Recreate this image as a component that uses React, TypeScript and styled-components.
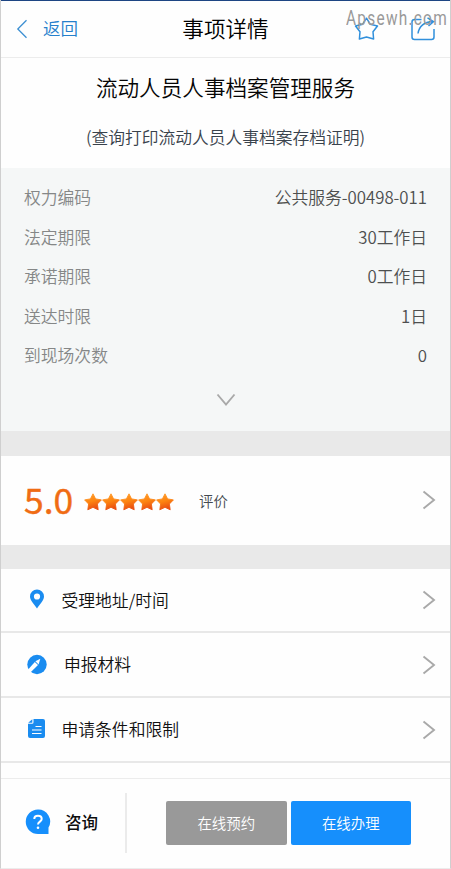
import React from "react";
import styled, { createGlobalStyle } from "styled-components";

const Global = createGlobalStyle`
  * { box-sizing: border-box; }
  body { margin: 0; background: #fff; font-family: "Noto Sans CJK SC", "Noto Sans", sans-serif; font-weight: 350; }
`;

const Screen = styled.main`
  width: 451px;
  height: 869px;
  display: flex;
  flex-direction: column;
  overflow: hidden;
  border-left: 1px solid #cfcfcf;
  border-right: 1px solid #cfcfcf;
  border-bottom: 1px solid #ececec;
  background: #fefefe;
`;

const Header = styled.header`
  position: relative;
  height: 58px;
  flex: none;
  display: grid;
  grid-template-columns: 1fr auto 1fr;
  align-items: center;
  border-top: 1px solid #1d4583;
  border-bottom: 1px solid #ececec;
  margin: 0 -1px;
  padding: 0 16px;
`;

const Back = styled.a`
  display: flex;
  align-items: center;
  gap: 15px;
  font-size: 17.5px;
  line-height: 24px;
  color: #2580cc;
`;

const BackText = styled.span`
  padding-bottom: 2px;
`;

const HeaderTitle = styled.h1`
  margin: 0;
  padding-bottom: 2px;
  font-size: 21.6px;
  line-height: 30px;
  font-weight: 350;
  color: #000;
`;

const Actions = styled.div`
  display: flex;
  justify-content: flex-end;
  align-items: center;
  gap: 32px;
`;

const Watermark = styled.span`
  position: absolute;
  left: 346px;
  top: 7px;
  font: 400 19.5px/22px "Roboto", sans-serif;
  letter-spacing: 1.6px;
  transform: scaleX(0.79);
  transform-origin: left center;
  color: #999;
`;

const Heading = styled.section`
  height: 110px;
  flex: none;
  padding-top: 13px;
  text-align: center;
`;

const Name = styled.h2`
  margin: 0;
  font-size: 21.6px;
  line-height: 32px;
  font-weight: 350;
  color: #050505;
`;

const Subtitle = styled.p`
  margin: 21px 0 0;
  font-size: 16.75px;
  line-height: 26px;
  color: #39424c;
`;

const Info = styled.section`
  height: 263px;
  flex: none;
  padding: 10.4px 23px 0;
  background: #f5f7f7;
`;

const InfoRow = styled.div`
  display: flex;
  justify-content: space-between;
  height: 39.5px;
  line-height: 39.5px;
  font-size: 16.8px;
`;

const Label = styled.span`
  color: #858787;
`;

const Value = styled.span`
  color: #4d4f4f;
`;

const Expand = styled.div`
  display: flex;
  justify-content: center;
  padding-top: 17px;
`;

const Gap = styled.div<{ $h: number }>`
  height: ${(p) => p.$h}px;
  flex: none;
  background: #e9e9e9;
`;

const Rating = styled.section`
  height: 89px;
  flex: none;
  display: flex;
  align-items: center;
  padding: 0 14px 2px 23px;
`;

const Score = styled.strong`
  width: 60px;
  padding-bottom: 2px;
  font-size: 35.5px;
  line-height: 50px;
  font-weight: 400;
  -webkit-text-stroke: 0.4px #f06c14;
  color: #f06c14;
`;

const Stars = styled.div`
  display: flex;
  width: 115px;
  padding-top: 4px;
`;

const RatingText = styled.span`
  flex: 1;
  padding-top: 2px;
  font-size: 14.4px;
  color: #444a50;
`;

const Item = styled.div<{ $indent: number }>`
  height: 65.2px;
  flex: none;
  display: grid;
  grid-template-columns: ${(p) => p.$indent}px 1fr auto;
  align-items: center;
  padding: 0 14px 0 23px;
  border-bottom: 2px solid #e8e8e8;
  font-size: 16.8px;
  color: #111;

  &:first-child {
    height: 64px;
  }
`;

const ItemText = styled.span`
  padding-bottom: 1px;
`;

const ItemList = styled.section`
  flex: none;
`;

const Footer = styled.footer`
  height: 90px;
  margin-top: auto;
  flex: none;
  display: flex;
  align-items: center;
  border-top: 1px solid #ececec;
  padding-bottom: 1px;
`;

const Consult = styled.div`
  width: 126px;
  height: 60px;
  flex: none;
  display: flex;
  align-items: center;
  gap: 14px;
  padding: 0 0 2px 24px;
  border-right: 2px solid #ebebeb;
  font-size: 16.5px;
  font-weight: 500;
  color: #0d0d0d;
`;

const Buttons = styled.div`
  display: flex;
  gap: 4px;
  margin-left: 39px;
`;

const Button = styled.button<{ $primary?: boolean }>`
  width: 120.5px;
  height: 44px;
  padding: 0 0 2px;
  border: 0;
  border-radius: 2px;
  font: 350 14.4px "Noto Sans CJK SC", sans-serif;
  color: #fff;
  background: ${(p) => (p.$primary ? "#168ffc" : "#999")};
`;

const STAR = "M9 0.8 L11.6 5.9 L17.4 6.9 L13.4 11 L14.2 16.8 L9 14.3 L3.8 16.8 L4.6 11 L0.6 6.9 L6.4 5.9 Z";

const Chevron = () => (
  <svg width="14" height="20" viewBox="0 0 14 20" fill="none" stroke="#a9a9a9" strokeWidth="1.9">
    <path d="M1.5 1.5 L12 10 L1.5 18.5" />
  </svg>
);

const PinIcon = () => (
  <svg width="26" height="22" viewBox="0 0 26 22">
    <path fillRule="evenodd" fill="#1a8cf0" d="M13 0.500a7 7 0 0 1 7 7c0 4-4.500 8-7 12-2.500-4-7-8-7-12a7 7 0 0 1 7-7zm0 3.900a3.100 3.100 0 1 0 0 6.200 3.100 3.100 0 0 0 0-6.200z" />
  </svg>
);

const PencilIcon = () => (
  <svg width="26" height="22" viewBox="0 0 26 22">
    <circle cx="13" cy="10.500" r="9.700" fill="#1a8cf0" />
    <path d="M3.300 16.500 L10.800 7.900 L14 10.900 L6.200 18.700 Z" fill="#fff" />
    <path d="M11.400 7.300 L16.300 4.700 L14.600 10.400 Z" fill="#fff" />
  </svg>
);

const DocIcon = () => (
  <svg width="26" height="24" viewBox="0 0 26 24">
    <path d="M9.500 1H19Q21 1 21 3V18Q21 20 19 20H6Q4 20 4 18V5.800H8Q9.500 5.800 9.500 4.300Z" fill="#1a8cf0" />
    <path d="M4.200 4.700 L8.300 1.200 V4.700Z" fill="#1a8cf0" />
    <path d="M11.500 8.500H17.500M8 12H17.500M8 15.500H17.500" stroke="#fff" strokeWidth="1.200" />
  </svg>
);

const details = [
  ["权力编码", "公共服务-00498-011"],
  ["法定期限", "30工作日"],
  ["承诺期限", "0工作日"],
  ["送达时限", "1日"],
  ["到现场次数", "0"],
];

const items = [
  { text: "受理地址/时间", indent: 37.5, icon: <PinIcon /> },
  { text: "申报材料", indent: 40, icon: <PencilIcon /> },
  { text: "申请条件和限制", indent: 37.5, icon: <DocIcon /> },
];

export default function App() {
  return (
    <>
      <Global />
      <Screen>
        <Header>
          <Back>
            <svg width="12" height="20" viewBox="0 0 12 20" fill="none" stroke="#3c8fd2" strokeWidth="1.300">
              <path d="M10.500 1.200 L1.800 10 L10.500 18.800" />
            </svg>
            <BackText>返回</BackText>
          </Back>
          <HeaderTitle>事项详情</HeaderTitle>
          <Actions>
            <svg width="25" height="24" viewBox="0 0 25 24" fill="none" stroke="#3190dc" strokeWidth="1.500" strokeLinejoin="round">
              <path d="M12.500 1.200 L16.200 7.200 L23.500 9 L19 14.800 L19.600 22 L12.500 20 L5.400 22 L6 14.800 L1.500 9 L8.800 7.200 Z" />
            </svg>
            <svg width="24" height="24" viewBox="0 0 24 24" fill="none" stroke="#3190dc" strokeWidth="1.500">
              <path d="M10.500 2.500H3.500Q1 2.500 1 5V20Q1 22.500 3.500 22.500H20.500Q23 22.500 23 20V12" />
              <path d="M7 16.500C8 10 12 5 22 4.500M16.500 0.800L22.500 4.500L17.500 9" />
            </svg>
          </Actions>
          <Watermark>Apsewh.com</Watermark>
        </Header>
        <Heading>
          <Name>流动人员人事档案管理服务</Name>
          <Subtitle>(查询打印流动人员人事档案存档证明)</Subtitle>
        </Heading>
        <Info>
          {details.map(([label, value]) => (
            <InfoRow key={label}>
              <Label>{label}</Label>
              <Value>{value}</Value>
            </InfoRow>
          ))}
          <Expand>
            <svg width="20" height="14" viewBox="0 0 20 14" fill="none" stroke="#a9a9a9" strokeWidth="1.900">
              <path d="M1.500 1.500 L10 11.500 L18.500 1.500" />
            </svg>
          </Expand>
        </Info>
        <Gap $h={25} />
        <Rating>
          <Score>5.0</Score>
          <Stars>
            <svg width="91" height="18" viewBox="0 0 91 18">
              <defs>
                <linearGradient id="star" x1="0" y1="0" x2="0.300" y2="1">
                  <stop offset="0" stopColor="#ffa030" />
                  <stop offset="0.550" stopColor="#fd8410" />
                  <stop offset="1" stopColor="#ea5010" />
                </linearGradient>
              </defs>
              {[0, 1, 2, 3, 4].map((i) => (
                <path key={i} d={STAR} transform={`translate(${i * 18} 0)`} fill="url(#star)" stroke="url(#star)" strokeWidth="0.900" strokeLinejoin="round" />
              ))}
            </svg>
          </Stars>
          <RatingText>评价</RatingText>
          <Chevron />
        </Rating>
        <Gap $h={24} />
        <ItemList>
          {items.map((item) => (
            <Item key={item.text} $indent={item.indent}>
              {item.icon}
              <ItemText>{item.text}</ItemText>
              <Chevron />
            </Item>
          ))}
        </ItemList>
        <Footer>
          <Consult>
            <svg width="26" height="26" viewBox="0 0 26 26">
              <path d="M13 0.500a12 12 0 0 1 10.500 18V25H13A12.200 12.200 0 0 1 13 0.500z" fill="#168ffc" />
              <path d="M9.300 10C9.300 5.800 16.700 5.800 16.700 10C16.700 12.600 13 12.600 13 15.500" fill="none" stroke="#fff" strokeWidth="2" />
              <circle cx="13" cy="18.700" r="1.300" fill="#fff" />
            </svg>
            咨询
          </Consult>
          <Buttons>
            <Button>在线预约</Button>
            <Button $primary>在线办理</Button>
          </Buttons>
        </Footer>
      </Screen>
    </>
  );
}
